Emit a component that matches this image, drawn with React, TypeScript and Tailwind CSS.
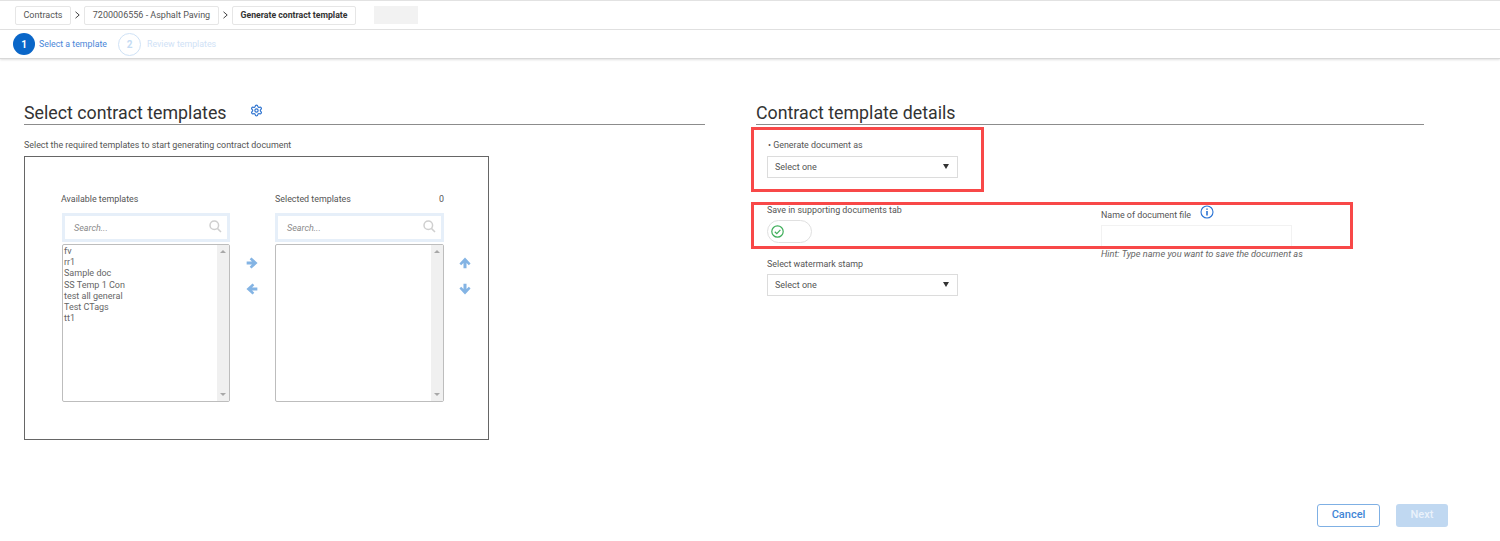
import React from "react";
import { Settings } from "lucide-react";

function Crumb({ children, bold, width }: { children: React.ReactNode; bold?: boolean; width: string }) {
  return (
    <div className={`${width} h-[19px] pt-[1px] flex items-center justify-center border border-[#e6e6e6] rounded-[2px] whitespace-nowrap ${bold ? "text-[8.7px] font-bold text-[#333]" : "text-[9px] text-[#555]"}`}>
      {children}
    </div>
  );
}

function Chevron() {
  return (
    <svg width="7" height="8" viewBox="0 0 7 8" fill="none" stroke="#444" strokeWidth="1" className="mx-[3px]">
      <path d="M1.5 .8 L5.2 4 L1.5 7.2" />
    </svg>
  );
}

function Arrow({ rotate }: { rotate: string }) {
  return (
    <svg width="12" height="12" viewBox="0 0 11 11" className={rotate}>
      <path d="M.6 4.1 H5.4 L3.4 2 L5 .4 L10.6 5.5 L5 10.6 L3.4 9 L5.4 6.9 H.6 Z" fill="#84b4e4" />
    </svg>
  );
}

function Search() {
  return (
    <div className="h-[29px] bg-[#e6eff9] p-[3px]">
      <div className="h-full bg-white flex items-center justify-between pl-[9px] pr-[5px]">
        <span className="italic text-[9px] text-[#8a8a8a] mt-[2px]">Search...</span>
        <svg width="13" height="13" viewBox="0 0 13 13" fill="none" stroke="#cfcfcf" strokeWidth="1.5" className="-mt-[3px]">
          <circle cx="5.3" cy="5.3" r="4.3" />
          <path d="M8.6 8.6 L12 12" />
        </svg>
      </div>
    </div>
  );
}

function ListBox({ items }: { items: string[] }) {
  return (
    <div className="mt-[2px] h-[158px] border border-[#bdbdbd] rounded-[2px] flex">
      <div className="flex-1 pl-[1px] pt-[1px] text-[9px] leading-[11.2px] text-[#666]">
        {items.map((t) => (
          <div key={t}>{t}</div>
        ))}
      </div>
      <div className="w-[12px] bg-[#f0f0f0] flex flex-col items-center justify-between py-[5px]">
        <div className="w-0 h-0 border-x-[3px] border-x-transparent border-b-[3px] border-b-[#a8a8a8]" />
        <div className="w-0 h-0 border-x-[3px] border-x-transparent border-t-[3px] border-t-[#a8a8a8]" />
      </div>
    </div>
  );
}

function Select() {
  return (
    <div className="w-[191px] h-[22px] border border-[#dcdcdc] flex items-center justify-between pl-[7px] pr-[8px] text-[9px] text-[#555]">
      <span>Select one</span>
      <div className="w-0 h-0 border-x-[3.5px] border-x-transparent border-t-[5px] border-t-[#333] -mt-[1px]" />
    </div>
  );
}

export default function App() {
  return (
    <div className="relative w-[1500px] h-[541px] bg-white overflow-hidden font-['Roboto',sans-serif]">
      {/* Breadcrumb */}
      <div className="h-[30px] border-t border-b border-[#e2e2e2] flex items-center pl-[15px]">
        <Crumb width="w-[56px]">Contracts</Crumb>
        <Chevron />
        <Crumb width="w-[135px]">7200006556 - Asphalt Paving</Crumb>
        <Chevron />
        <Crumb bold width="w-[124px]">Generate contract template</Crumb>
        <div className="ml-[18px] w-[44px] h-[18px] bg-[#f2f2f2]" />
      </div>

      {/* Stepper */}
      <div className="h-[29px] flex items-center pl-[13px] border-b border-[#d8d8d8] shadow-[0_1px_2px_rgba(0,0,0,0.12)]">
        <div className="w-[22px] h-[22px] rounded-full bg-[#0a66c8] text-white text-[10px] font-bold flex items-center justify-center">1</div>
        <span className="ml-[4px] mt-[1px] w-[68px] text-[8.8px] text-[#4a86d8] whitespace-nowrap">Select a template</span>
        <div className="ml-[11px] w-[23px] h-[23px] rounded-full border border-[#cfe2f6] text-[#c6dcf4] text-[10px] font-bold flex items-center justify-center">2</div>
        <span className="ml-[6px] mt-[1px] text-[8.8px] text-[#d0e2f6] whitespace-nowrap">Review templates</span>
      </div>

      {/* Main */}
      <div className="h-[445px] pt-[42px] pl-[24px] flex items-start">
        <section className="w-[681px]">
          <div className="h-[24px] border-b border-[#8c8c8c] flex items-start">
            <h2 className="text-[17.8px] leading-[24px] text-[#333]">Select contract templates</h2>
            <Settings size={13} strokeWidth={2.2} className="ml-[23px] mt-[3px] text-[#2f74d0]" />
          </div>
          <p className="mt-[14px] text-[8.9px] leading-[12px] text-[#555]">Select the required templates to start generating contract document</p>
          <div className="mt-[5px] w-[465px] h-[284px] border border-[#666] pt-[36px] pl-[37px] flex items-start">
            <div className="w-[168px]">
              <div className="h-[20px] -ml-[1px] text-[8.9px] leading-[12px] text-[#555]">Available templates</div>
              <Search />
              <ListBox items={["fv", "rr1", "Sample doc", "SS Temp 1 Con", "test all general", "Test CTags", "tt1"]} />
            </div>
            <div className="w-[45px] pr-[2px] mt-[64px] flex flex-col items-center gap-[14px]">
              <Arrow rotate="" />
              <Arrow rotate="rotate-180" />
            </div>
            <div className="w-[169px]">
              <div className="h-[20px] flex justify-between text-[8.9px] leading-[12px] text-[#555]">
                <span>Selected templates</span>
                <span>0</span>
              </div>
              <Search />
              <ListBox items={[]} />
            </div>
            <div className="w-[42px] mt-[64px] flex flex-col items-center gap-[14px]">
              <Arrow rotate="-rotate-90" />
              <Arrow rotate="rotate-90" />
            </div>
          </div>
        </section>

        <section className="ml-[51px] w-[668px]">
          <div className="h-[24px] border-b border-[#8c8c8c]">
            <h2 className="text-[17.8px] leading-[24px] text-[#333]">Contract template details</h2>
          </div>
          <div className="pl-[11px] flex items-start">
            <div className="w-[334px] text-[8.9px] leading-[12px] text-[#555]">
              <div className="mt-[14px] mb-[5px] pl-[1px]">• Generate document as</div>
              <Select />
              <div className="mt-[26px] mb-[4px]">Save in supporting documents tab</div>
              <div className="w-[45px] h-[23px] border border-[#e0e0e0] rounded-full flex items-center pl-[3px]">
                <svg width="13" height="13" viewBox="0 0 13 13" fill="none" stroke="#3fae5a" strokeWidth="1.2">
                  <circle cx="6.5" cy="6.5" r="5.7" />
                  <path d="M3.8 6.7 L5.8 8.6 L9.4 4.8" />
                </svg>
              </div>
              <div className="mt-[15px] mb-[4px]">Select watermark stamp</div>
              <Select />
            </div>
            <div className="text-[8.9px] leading-[12px] text-[#555]">
              <div className="mt-[84px] flex items-start">
                <span>Name of document file</span>
                <svg width="14" height="14" viewBox="0 0 14 14" fill="none" stroke="#2a73d4" strokeWidth="1.1" className="ml-[9px] -mt-[4px]">
                  <circle cx="7" cy="7" r="6" />
                  <path d="M7 6 V10.5" strokeWidth="1.6" />
                  <path d="M7 3.5 V4.8" strokeWidth="1.6" />
                </svg>
              </div>
              <div className="mt-[4px] w-[191px] h-[23px] border border-[#f2f2f2]" />
              <div className="italic text-[9.2px] text-[#666] whitespace-nowrap">Hint: Type name you want to save the document as</div>
            </div>
          </div>
        </section>
      </div>

      {/* Footer */}
      <div className="flex justify-end gap-[16px] pr-[52px]">
        <button className="w-[63px] h-[23px] border border-[#7fb0e4] rounded-[3px] text-[11px] font-medium text-[#3f86d6]">Cancel</button>
        <button className="w-[52px] h-[23px] bg-[#c0d8f1] rounded-[3px] text-[11px] font-medium text-[#eaf2fb]">Next</button>
      </div>

      {/* Annotation boxes */}
      <div className="absolute left-[751px] top-[127px] w-[233px] h-[65px] border-[3px] border-[#f84848]" />
      <div className="absolute left-[751px] top-[202px] w-[602px] h-[47px] border-[3px] border-[#f84848]" />
    </div>
  );
}
